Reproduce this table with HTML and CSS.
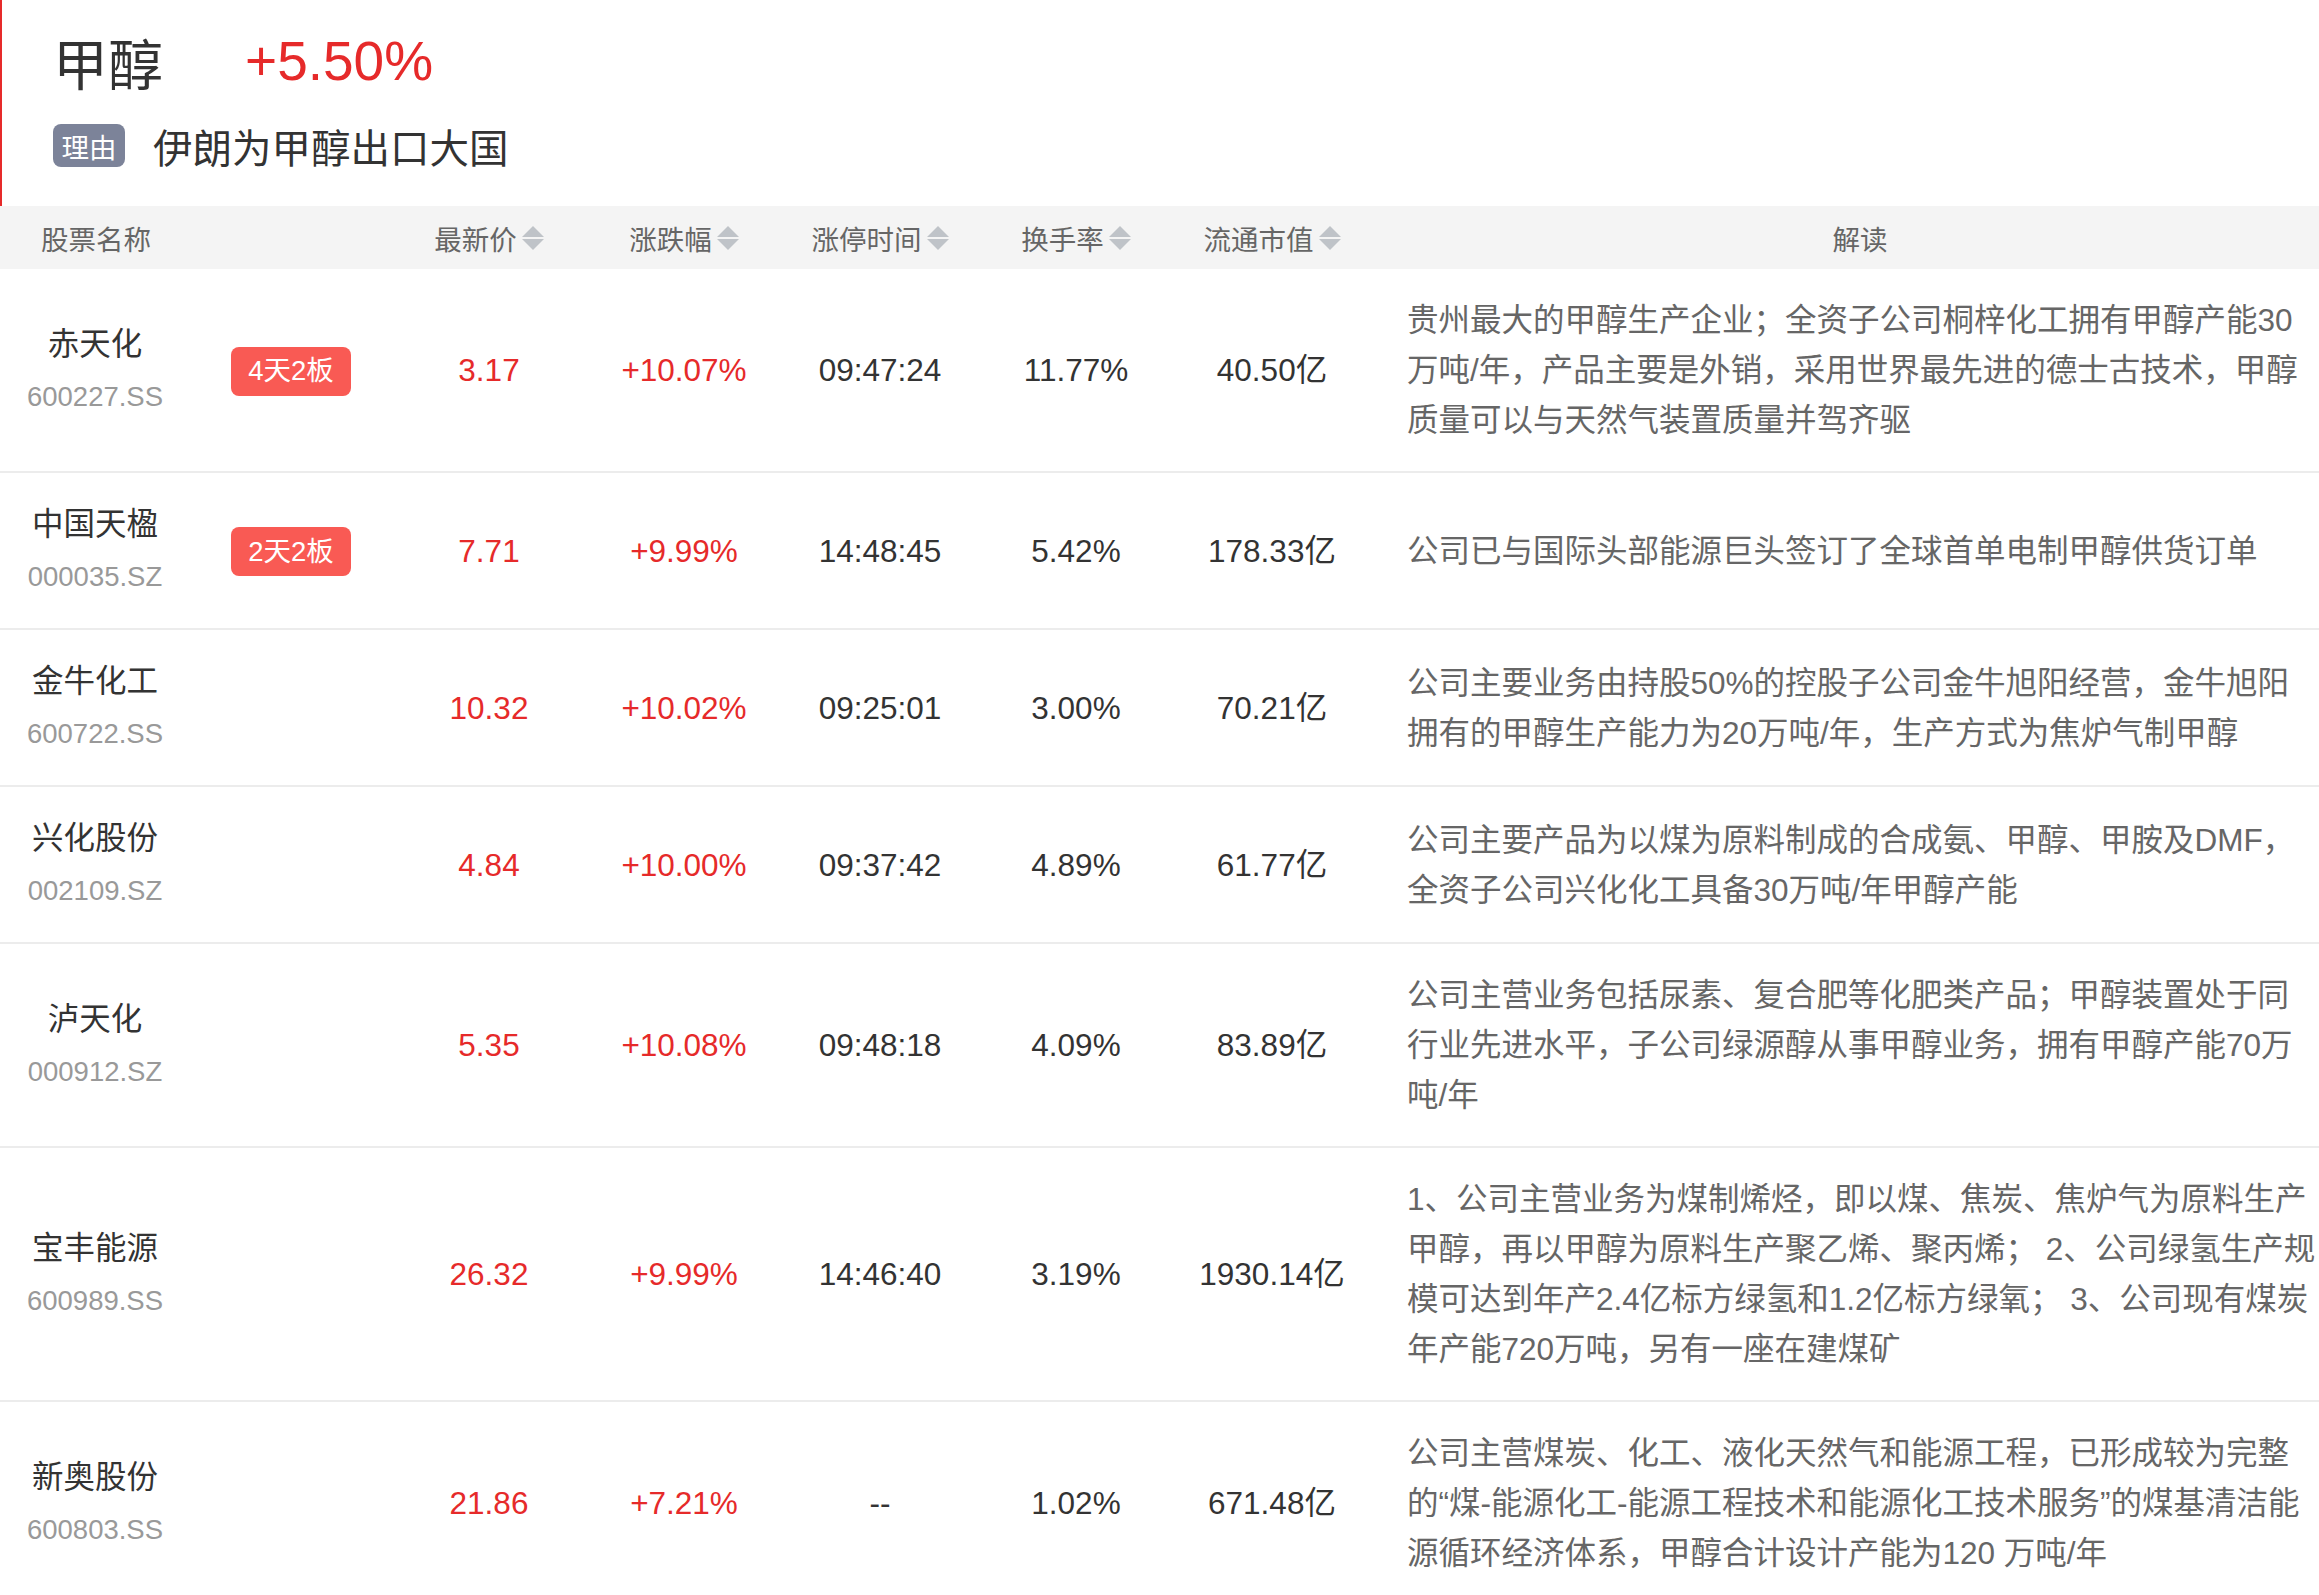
FILE: index.html
```html
<!DOCTYPE html>
<html lang="zh-CN">
<head>
<meta charset="utf-8">
<title>甲醇</title>
<link rel="stylesheet" href="styles.css">
</head>
<body>
<div class="topic">
  <div class="topic-title">
    <span class="topic-name">甲醇</span>
    <span class="topic-rate">+5.50%</span>
  </div>
  <div class="topic-reason">
    <span class="reason-tag">理由</span>
    <span class="reason-text">伊朗为甲醇出口大国</span>
  </div>
</div>

<table class="stocks">
  <colgroup>
    <col class="c-name"><col class="c-badge"><col class="c-price"><col class="c-num"><col class="c-num"><col class="c-num"><col class="c-num"><col class="c-desc">
  </colgroup>
  <thead>
    <tr>
      <th class="th-name" colspan="2">股票名称</th>
      <th><span class="sortable">最新价<svg class="sort" viewBox="0 0 22 24"><path d="M0 11 L11 0 L22 11 Z"/><path d="M0 13 L22 13 L11 24 Z"/></svg></span></th>
      <th><span class="sortable">涨跌幅<svg class="sort" viewBox="0 0 22 24"><path d="M0 11 L11 0 L22 11 Z"/><path d="M0 13 L22 13 L11 24 Z"/></svg></span></th>
      <th><span class="sortable">涨停时间<svg class="sort" viewBox="0 0 22 24"><path d="M0 11 L11 0 L22 11 Z"/><path d="M0 13 L22 13 L11 24 Z"/></svg></span></th>
      <th><span class="sortable">换手率<svg class="sort" viewBox="0 0 22 24"><path d="M0 11 L11 0 L22 11 Z"/><path d="M0 13 L22 13 L11 24 Z"/></svg></span></th>
      <th><span class="sortable">流通市值<svg class="sort" viewBox="0 0 22 24"><path d="M0 11 L11 0 L22 11 Z"/><path d="M0 13 L22 13 L11 24 Z"/></svg></span></th>
      <th>解读</th>
    </tr>
  </thead>
  <tbody>
    <tr>
      <td class="name"><div class="stock-name">赤天化</div><div class="stock-code">600227.SS</div></td>
      <td class="badge-cell"><span class="badge">4天2板</span></td>
      <td class="up">3.17</td>
      <td class="up">+10.07%</td>
      <td>09:47:24</td>
      <td>11.77%</td>
      <td>40.50亿</td>
      <td class="desc">贵州最大的甲醇生产企业；全资子公司桐梓化工拥有甲醇产能30万吨/年，产品主要是外销，采用世界最先进的德士古技术，甲醇质量可以与天然气装置质量并驾齐驱</td>
    </tr>
    <tr>
      <td class="name"><div class="stock-name">中国天楹</div><div class="stock-code">000035.SZ</div></td>
      <td class="badge-cell"><span class="badge">2天2板</span></td>
      <td class="up">7.71</td>
      <td class="up">+9.99%</td>
      <td>14:48:45</td>
      <td>5.42%</td>
      <td>178.33亿</td>
      <td class="desc">公司已与国际头部能源巨头签订了全球首单电制甲醇供货订单</td>
    </tr>
    <tr>
      <td class="name"><div class="stock-name">金牛化工</div><div class="stock-code">600722.SS</div></td>
      <td class="badge-cell"></td>
      <td class="up">10.32</td>
      <td class="up">+10.02%</td>
      <td>09:25:01</td>
      <td>3.00%</td>
      <td>70.21亿</td>
      <td class="desc">公司主要业务由持股50%的控股子公司金牛旭阳经营，金牛旭阳拥有的甲醇生产能力为20万吨/年，生产方式为焦炉气制甲醇</td>
    </tr>
    <tr>
      <td class="name"><div class="stock-name">兴化股份</div><div class="stock-code">002109.SZ</div></td>
      <td class="badge-cell"></td>
      <td class="up">4.84</td>
      <td class="up">+10.00%</td>
      <td>09:37:42</td>
      <td>4.89%</td>
      <td>61.77亿</td>
      <td class="desc">公司主要产品为以煤为原料制成的合成氨、甲醇、甲胺及DMF，全资子公司兴化化工具备30万吨/年甲醇产能</td>
    </tr>
    <tr>
      <td class="name"><div class="stock-name">泸天化</div><div class="stock-code">000912.SZ</div></td>
      <td class="badge-cell"></td>
      <td class="up">5.35</td>
      <td class="up">+10.08%</td>
      <td>09:48:18</td>
      <td>4.09%</td>
      <td>83.89亿</td>
      <td class="desc">公司主营业务包括尿素、复合肥等化肥类产品；甲醇装置处于同行业先进水平，子公司绿源醇从事甲醇业务，拥有甲醇产能70万吨/年</td>
    </tr>
    <tr>
      <td class="name"><div class="stock-name">宝丰能源</div><div class="stock-code">600989.SS</div></td>
      <td class="badge-cell"></td>
      <td class="up">26.32</td>
      <td class="up">+9.99%</td>
      <td>14:46:40</td>
      <td>3.19%</td>
      <td>1930.14亿</td>
      <td class="desc">1、公司主营业务为煤制烯烃，即以煤、焦炭、焦炉气为原料生产甲醇，再以甲醇为原料生产聚乙烯、聚丙烯； 2、公司绿氢生产规模可达到年产2.4亿标方绿氢和1.2亿标方绿氧； 3、公司现有煤炭年产能720万吨，另有一座在建煤矿</td>
    </tr>
    <tr>
      <td class="name"><div class="stock-name">新奥股份</div><div class="stock-code">600803.SS</div></td>
      <td class="badge-cell"></td>
      <td class="up">21.86</td>
      <td class="up">+7.21%</td>
      <td>--</td>
      <td>1.02%</td>
      <td>671.48亿</td>
      <td class="desc">公司主营煤炭、化工、液化天然气和能源工程，已形成较为完整的“煤-能源化工-能源工程技术和能源化工技术服务”的煤基清洁能源循环经济体系，甲醇合计设计产能为120 万吨/年</td>
    </tr>
  </tbody>
</table>
</body>
</html>
```

FILE: styles.css
```css
html, body {
  margin: 0;
  padding: 0;
  overflow: hidden;
  background: #ffffff;
}

body {
  font-family: "Liberation Sans", "Noto Sans CJK SC", sans-serif;
  color: #333333;
}

.topic {
  border-left: 2px solid #e62a2a;
  padding: 26px 0 39px 51px;
}

.topic-title {
  display: flex;
  align-items: center;
  height: 70px;
}

.topic-name {
  font-size: 55px;
  color: #333333;
}

.topic-rate {
  font-size: 55px;
  color: #e62a2a;
  margin-left: 82px;
}

.topic-reason {
  display: flex;
  align-items: center;
  margin-top: 28px;
  height: 43px;
}

.reason-tag {
  display: inline-flex;
  align-items: center;
  justify-content: center;
  width: 72px;
  height: 43px;
  border-radius: 8px;
  background: #7c8399;
  color: #ffffff;
  font-size: 27.5px;
}

.reason-text {
  font-size: 39.5px;
  color: #333333;
  margin-left: 28px;
}

.stocks {
  width: 2350px;
  table-layout: fixed;
  border-collapse: collapse;
  border-spacing: 0;
}

.c-name { width: 190px; }
.c-badge { width: 202px; }
.c-price { width: 194px; }
.c-num { width: 196px; }
.c-desc { width: 980px; }

.stocks th {
  height: 63px;
  padding: 0;
  background: #f4f4f4;
  color: #666666;
  font-size: 27.5px;
  font-weight: normal;
  text-align: center;
}

.stocks th.th-name {
  text-align: left;
  padding-left: 41px;
}

.sortable {
  display: inline-flex;
  align-items: center;
}

.sort {
  width: 22px;
  height: 24px;
  margin-left: 5px;
  fill: #bfc3c8;
}

.stocks td {
  padding: 26px 0;
  border-bottom: 2px solid #ececec;
  text-align: center;
  vertical-align: middle;
  font-size: 31.5px;
  line-height: 50px;
  color: #333333;
}

.stocks td.up {
  color: #e62a2a;
}

.stock-name {
  font-size: 31.5px;
  line-height: 50px;
  color: #333333;
}

.stock-code {
  font-size: 27.5px;
  line-height: 50px;
  margin-top: 3px;
  color: #999999;
}

.badge {
  display: inline-flex;
  align-items: center;
  justify-content: center;
  width: 120px;
  height: 49px;
  border-radius: 8px;
  background: #f95a54;
  color: #ffffff;
  font-size: 27.5px;
  line-height: 1;
}

.stocks td.desc {
  text-align: left;
  padding-left: 37px;
  padding-right: 32px;
  color: #666666;
}
```
